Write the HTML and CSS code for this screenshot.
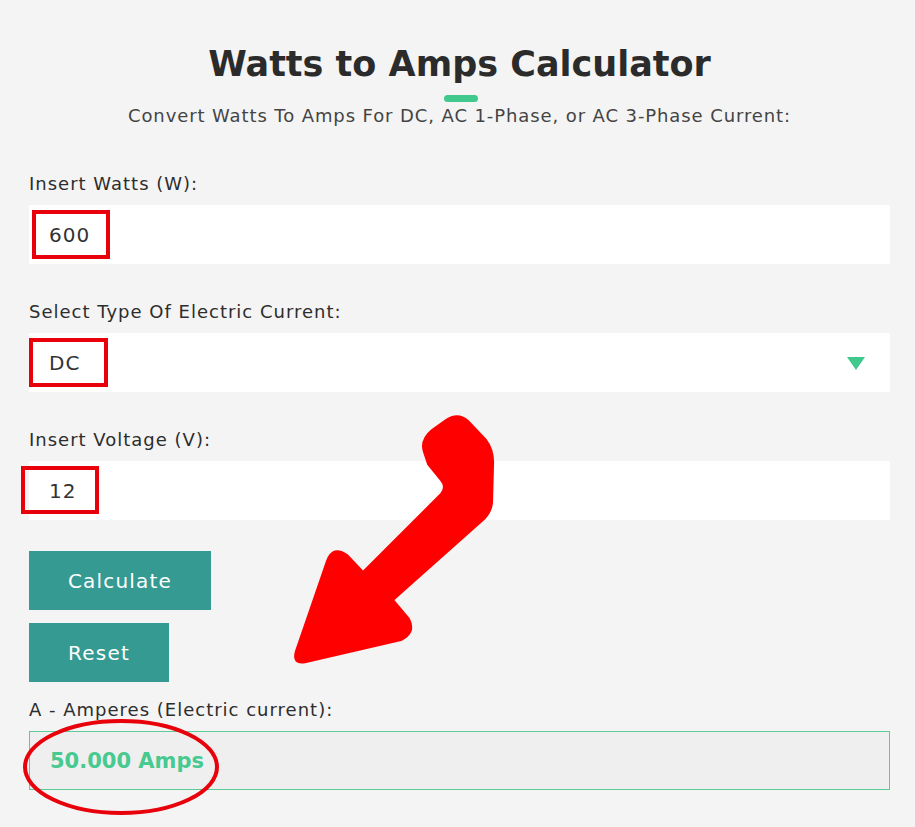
FILE: index.html
```html
<!DOCTYPE html>
<html lang="en">
<head>
  <meta charset="UTF-8">
  <meta name="viewport" content="width=device-width, initial-scale=1.0">
  <title>Watts to Amps Calculator</title>
  <link rel="stylesheet" href="styles.css">
</head>
<body>
  <div class="calc">
    <h1 class="title">Watts to Amps Calculator</h1>
    <div class="title-bar"></div>
    <p class="subtitle">Convert Watts To Amps For DC, AC 1-Phase, or AC 3-Phase Current:</p>

    <label class="field-label first">Insert Watts (W):</label>
    <div class="field">600</div>

    <label class="field-label">Select Type Of Electric Current:</label>
    <div class="field select">
      <span>DC</span>
      <span class="caret"></span>
    </div>

    <label class="field-label">Insert Voltage (V):</label>
    <div class="field">12</div>

    <div class="buttons">
      <button class="btn btn-calc">Calculate</button>
      <button class="btn btn-reset">Reset</button>
    </div>

    <label class="field-label result-label">A - Amperes (Electric current):</label>
    <div class="result">50.000 Amps</div>
  </div>

  <!-- anotaciones en rojo encima -->
  <svg class="marks" width="915" height="827" viewBox="0 0 915 827">
    <rect x="34" y="212" width="74" height="45" fill="none" stroke="#e8000b" stroke-width="4"/>
    <rect x="31" y="340" width="75" height="45" fill="none" stroke="#e8000b" stroke-width="4"/>
    <rect x="23" y="468" width="74" height="44" fill="none" stroke="#e8000b" stroke-width="4"/>
    <path d="M424,452 Q420,440 432,430 L446,420 Q458,412 468,421 L486,440 Q494,450 493,466 L492,503 Q491,512 484,519 L393,600 L409,619 Q416,633 401,640 L306,662 Q292,665 296,651 L327,561 Q333,545 347,555 L363,572 L441,494 Q447,487 441,480 L428,464 Z"
      fill="#ff0000" stroke="#ff0000" stroke-width="2" stroke-linejoin="round"/>
    <ellipse cx="121" cy="767" rx="96" ry="46" fill="none" stroke="#e8000b" stroke-width="4"/>
  </svg>
</body>
</html>
```

FILE: styles.css
```css
body {
  margin: 0;
  background-color: #f4f4f4;
  font-family: 'DejaVu Sans', 'Open Sans', sans-serif;
  color: #333;
}
.calc {
  padding: 0 25px 0 29px;
  display: flex;
  flex-direction: column;
}
.title {
  margin: 43px 0 0;
  text-align: center;
  font-size: 35px;
  font-weight: bold;
  color: #2b2b2b;
  line-height: 42px;
}
.title-bar {
  width: 34px;
  height: 7px;
  border-radius: 4px;
  background-color: #41c98d;
  margin: 10px auto 0;
  position: relative;
  left: 1px;
}
.subtitle {
  margin: 2px 0 0;
  text-align: center;
  font-size: 18px;
  letter-spacing: 0.9px;
  line-height: 24px;
  color: #444;
}
.field-label {
  display: block;
  font-size: 18px;
  letter-spacing: 1px;
  line-height: 24px;
  color: #2d2d2d;
  margin-top: 36px;
}
.field-label.first {
  margin-top: 44px;
}
.field {
  background-color: #fff;
  height: 59px;
  margin-top: 9px;
  padding-left: 20px;
  display: flex;
  align-items: center;
  font-size: 20px;
  letter-spacing: 1px;
  color: #333;
}
.select {
  justify-content: space-between;
  padding-right: 25px;
}
.caret {
  width: 0;
  height: 0;
  border-left: 9px solid transparent;
  border-right: 9px solid transparent;
  border-top: 13px solid #3fc98c;
  margin-top: 2px;
}
.buttons {
  display: flex;
  flex-direction: column;
  align-items: flex-start;
  gap: 13px;
  margin-top: 31px;
}
.btn {
  font-family: inherit;
  font-size: 20px;
  letter-spacing: 1.2px;
  color: #fff;
  background-color: #349a92;
  border: none;
  height: 59px;
  cursor: pointer;
}
.btn-calc {
  width: 182px;
}
.btn-reset {
  width: 140px;
}
.result-label {
  margin-top: 16px;
}
.result {
  margin-top: 9px;
  height: 57px;
  border: 1px solid #5ccb98;
  background-color: #efefef;
  display: flex;
  align-items: center;
  padding-left: 20px;
  font-size: 21px;
  font-weight: bold;
  color: #47c98f;
}
.marks {
  position: absolute;
  top: 0;
  left: 0;
  pointer-events: none;
}
```
